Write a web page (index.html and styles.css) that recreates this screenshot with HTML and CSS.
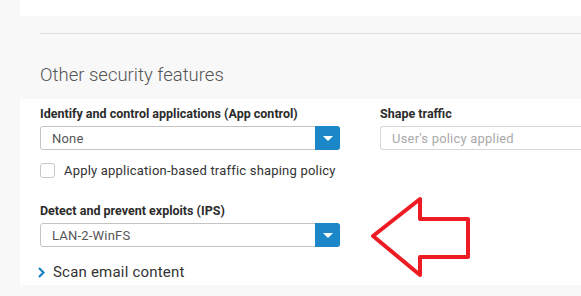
FILE: index.html
```html
<!DOCTYPE html>
<html lang="en">
<head>
    <meta charset="UTF-8">
    <title>Other security features</title>
    <link rel="stylesheet" href="styles.css">
</head>
<body>
    <div class="top-panel"></div>
    <div class="section-head">
        <hr class="divider">
        <h2>Other security features</h2>
    </div>

    <div class="panel">
        <div class="row">
            <div class="field">
                <label>Identify and control applications (App control)</label>
                <div class="select">
                    <span>None</span>
                    <span class="select-btn"><i class="caret"></i></span>
                </div>
                <div class="check">
                    <span class="box"></span>
                    <span>Apply application-based traffic shaping policy</span>
                </div>
            </div>
            <div class="field field-right">
                <label>Shape traffic</label>
                <div class="input-disabled">User's policy applied</div>
            </div>
        </div>

        <div class="field field-ips">
            <label>Detect and prevent exploits (IPS)</label>
            <div class="select">
                <span>LAN-2-WinFS</span>
                <span class="select-btn"><i class="caret"></i></span>
            </div>
        </div>

        <div class="expander">
            <svg width="7" height="11" viewBox="0 0 7 11"><path d="M1 1 L5.5 5.5 L1 10" fill="none" stroke="#1b7fc4" stroke-width="2.2"/></svg>
            <span>Scan email content</span>
        </div>

        <!-- annotation arrow -->
        <svg class="arrow" width="104" height="84" viewBox="0 0 104 84">
            <path d="M4 41 L51 4 L51 24 L99 24 L99 62 L51 62 L51 80 Z" fill="none" stroke="#ed1c24" stroke-width="4" stroke-linejoin="round"/>
        </svg>
    </div>
</body>
</html>
```

FILE: styles.css
```css
body {
    margin: 0;
    background-color: #f8f8f8;
    font-family: Roboto, "Liberation Sans", sans-serif;
    color: #333;
    width: 581px;
    height: 296px;
    overflow: hidden;
}
.top-panel {
    margin-left: 20px;
    height: 16px;
    background-color: #fff;
}
.section-head {
    padding: 17px 0 0 40px;
    height: 66px;
}
.divider {
    margin: 0;
    border: none;
    border-top: 1px solid #dcdcdc;
}
h2 {
    margin: 30px 0 0 0;
    font-size: 18.5px;
    font-weight: 300;
    color: #555;
}
.panel {
    position: relative;
    margin-left: 20px;
    height: 186px;
    background-color: #fff;
    padding: 7px 0 0 20px;
    box-sizing: border-box;
}
.row {
    display: flex;
    gap: 40px;
}
.field {
    width: 300px;
}
.field-right {
    flex: 1;
}
label {
    display: block;
    font-size: 12.5px;
    font-weight: bold;
    color: #2c2c2c;
    height: 20px;
}
.select {
    display: flex;
    align-items: center;
    justify-content: space-between;
    height: 24px;
    border: 1px solid #c4c4c4;
    border-radius: 3px;
    box-sizing: border-box;
    padding-left: 11px;
    font-size: 13px;
    color: #555;
    letter-spacing: 0.2px;
}
.select-btn {
    display: flex;
    align-items: center;
    justify-content: center;
    width: 25px;
    height: 24px;
    margin-right: -1px;
    background-color: #1b87c9;
    border-radius: 0 3px 3px 0;
}
.caret {
    width: 0;
    height: 0;
    border-left: 5px solid transparent;
    border-right: 5px solid transparent;
    border-top: 5px solid #fff;
}
.input-disabled {
    height: 24px;
    border: 1px solid #d8d8d8;
    border-right: none;
    border-radius: 3px 0 0 3px;
    box-sizing: border-box;
    padding: 4px 11px;
    font-size: 13px;
    color: #aaa;
    letter-spacing: 0.2px;
}
.check {
    display: flex;
    align-items: center;
    gap: 9px;
    margin-top: 13px;
    font-size: 13px;
    color: #333;
    letter-spacing: 0.2px;
}
.box {
    width: 13px;
    height: 13px;
    border: 1px solid #c8c8c8;
    border-radius: 3px;
}
.field-ips {
    margin-top: 25px;
}
.expander {
    display: flex;
    align-items: center;
    gap: 8px;
    margin: 16px 0 0 -2px;
    font-size: 15px;
    color: #333;
    letter-spacing: 0.2px;
}
.arrow {
    position: absolute;
    left: 349px;
    top: 96px;
}
```
